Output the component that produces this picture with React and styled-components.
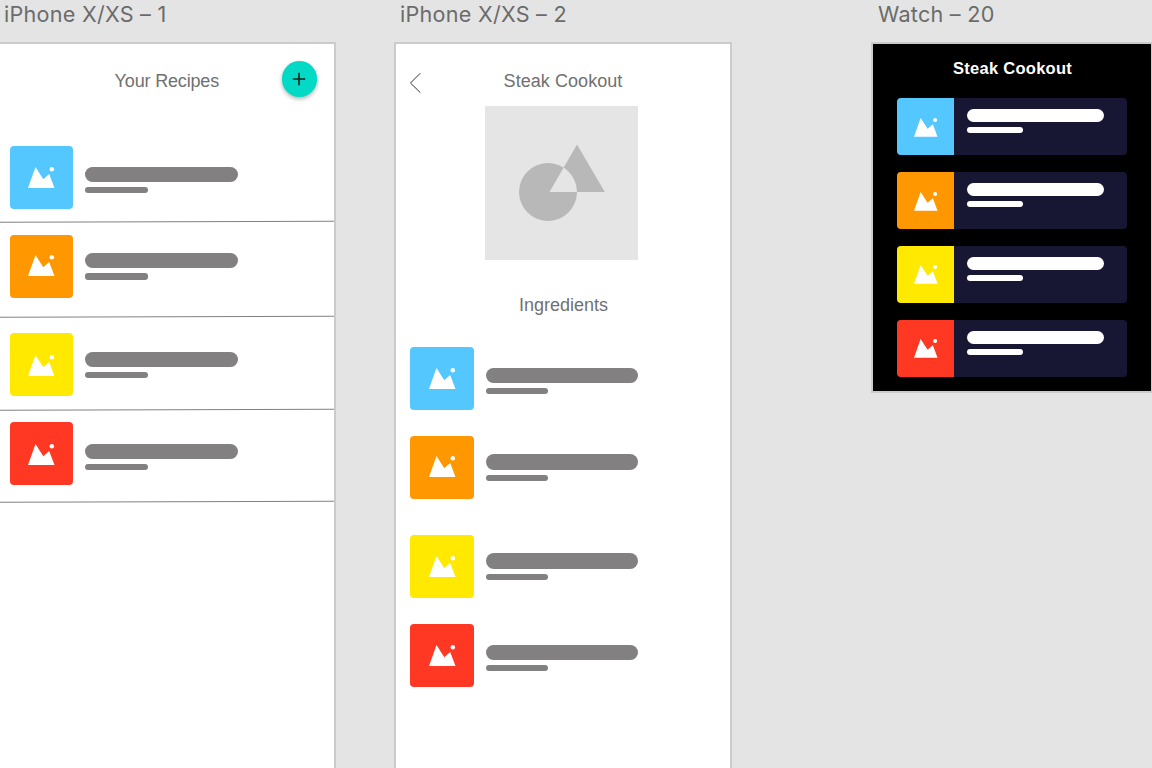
import React from "react";
import styled, { createGlobalStyle } from "styled-components";

const GlobalStyle = createGlobalStyle`
  * { box-sizing: border-box; }
  body { margin: 0; background: #e4e4e4; overflow: hidden; }
`;

const Canvas = styled.main`
  display: flex;
  align-items: flex-start;
  width: 1152px;
  height: 768px;
  overflow: hidden;
  background: #e4e4e4;
  font-family: "Liberation Sans", Arial, sans-serif;
`;

const Column = styled.section`
  flex: none;
  width: ${(p) => p.$width}px;
  margin-left: ${(p) => p.$gap || 0}px;
`;

const BoardLabel = styled.div`
  height: 42px;
  padding-left: ${(p) => p.$indent}px;
  font-family: Inter, sans-serif;
  font-size: 21.6px;
  line-height: 29px;
  letter-spacing: 0.25px;
  color: #6b6b6b;
  white-space: nowrap;
`;

const Phone = styled.div`
  height: 740px;
  background: #fff;
  border: 2px solid #cbcbcb;
  border-left-width: ${(p) => (p.$clipped ? 0 : 2)}px;
`;

const PhoneHeader = styled.header`
  display: grid;
  grid-template-columns: ${(p) => p.$columns};
  height: ${(p) => p.$height}px;
`;

const Title = styled.h1`
  margin: 0;
  padding: ${(p) => p.$top || 0}px 0 0 ${(p) => p.$left || 0}px;
  font-size: 18px;
  font-weight: 400;
  line-height: 20px;
  letter-spacing: ${(p) => p.$spacing || 0}px;
  text-align: center;
  white-space: nowrap;
  color: #707070;
`;

const SectionTitle = styled(Title)`
  height: 87px;
`;

const AddButton = styled.button`
  display: flex;
  align-items: center;
  justify-content: center;
  width: 35.6px;
  height: 35.8px;
  margin: 17.2px 0 0;
  padding: 0;
  border: 0;
  border-radius: 50%;
  background: #03dac5;
  box-shadow: 0 2px 4px rgba(0, 0, 0, 0.3);
`;

const BackButton = styled.button`
  display: block;
  width: 12px;
  height: 22px;
  margin: 28px 0 0 13px;
  padding: 0;
  border: 0;
  background: none;
  svg { display: block; }
`;

const Hero = styled.div`
  width: 153px;
  height: 154px;
  margin-left: 89px;
  background: #e5e5e5;
  svg { display: block; }
`;

const Row = styled.div`
  display: flex;
  align-items: flex-start;
  height: ${(p) => p.$height}px;
  padding: ${(p) => p.$top || 0}px 0 0 ${(p) => p.$left}px;
`;

const Divider = styled.div`
  height: 1px;
  margin-bottom: -1px;
  background: #808080;
  transform: translateY(-0.8px) rotate(-0.17deg);
`;

const Tile = styled.div`
  flex: none;
  width: ${(p) => p.$size}px;
  height: ${(p) => p.$size}px;
  padding: ${(p) => p.$iconTop}px 0 0 ${(p) => p.$iconLeft}px;
  border-radius: ${(p) => (p.$flush ? "4px 0 0 4px" : "4px")};
  background: ${(p) => p.$color};
  svg { display: block; }
`;

const Lines = styled.div`
  display: flex;
  flex-direction: column;
  gap: 5px;
  padding: ${(p) => p.$top}px 0 0 ${(p) => p.$left || 12.3}px;
`;

const Bar = styled.div`
  width: ${(p) => p.$width}px;
  height: ${(p) => p.$height}px;
  border-radius: ${(p) => (p.$height > 10 ? 8 : 3)}px;
  background: ${(p) => (p.$light ? "#fff" : "#828080")};
`;

const Watch = styled.div`
  height: 351px;
  border: 2px solid #cbcbcb;
  border-right-width: 1px;
  background: #000;
`;

const WatchTitle = styled.h2`
  height: 54px;
  margin: 0;
  padding: 15px 0 0 1px;
  font-size: 16.5px;
  font-weight: 700;
  line-height: 19px;
  letter-spacing: 0.28px;
  text-align: center;
  color: #fff;
`;

const WatchList = styled.div`
  display: flex;
  flex-direction: column;
  gap: 17px;
  padding-left: 24px;
`;

const WatchCard = styled.div`
  display: flex;
  width: 230px;
  height: 57px;
  border-radius: 4px;
  background: #181733;
`;

const COLORS = { blue: "#54c7ff", orange: "#ff9700", yellow: "#ffe900", red: "#ff3824" };

const RECIPES = [
  { color: "blue", height: 77, top: 0.6, icon: 21.4, lines: 21.2 },
  { color: "orange", height: 95, top: 12.6, icon: 20.4, lines: 18.6 },
  { color: "yellow", height: 93, top: 16, icon: 21.6, lines: 19 },
  { color: "red", height: 92, top: 12, icon: 21.8, lines: 21.6 },
];

const INGREDIENTS = [
  { color: "blue", height: 89, icon: 21.1, lines: 21 },
  { color: "orange", height: 98.6, icon: 20.4, lines: 18.4 },
  { color: "yellow", height: 89.2, icon: 21.6, lines: 18.7 },
  { color: "red", height: 64, icon: 21.2, lines: 21.2 },
];

const WATCH_ITEMS = [
  { color: "blue", icon: 20 },
  { color: "orange", icon: 20 },
  { color: "yellow", icon: 19.3 },
  { color: "red", icon: 19.2 },
];

function Mountains({ width = 27, height = 21.2 }) {
  return (
    <svg width={width} height={height} viewBox="0 0 27 21.2" fill="#fff">
      <path d="M7.5 0 15.3 12.2 21.2 7.1 26.5 21H0Z" />
      <circle cx="23.8" cy="2.3" r="2.25" />
    </svg>
  );
}

function PhoneRow({ item, left }) {
  return (
    <Row $height={item.height} $top={item.top} $left={left}>
      <Tile $size={63.4} $color={COLORS[item.color]} $iconTop={item.icon} $iconLeft={18.8}>
        <Mountains />
      </Tile>
      <Lines $top={item.lines}>
        <Bar $width={152.4} $height={15.3} />
        <Bar $width={62.4} $height={6.2} />
      </Lines>
    </Row>
  );
}

export default function App() {
  return (
    <Canvas>
      <GlobalStyle />
      <Column $width={336}>
        <BoardLabel $indent={4}>iPhone X/XS – 1</BoardLabel>
        <Phone $clipped>
          <PhoneHeader $columns="281.6px 36px" $height={101}>
            <Title $top={27} $left={52} $spacing={-0.17}>Your Recipes</Title>
            <AddButton aria-label="Add recipe">
              <svg width="14" height="14" viewBox="0 0 14 14" stroke="#06261f" strokeWidth="1.7">
                <path d="M7 .8v12.4M.8 7h12.4" />
              </svg>
            </AddButton>
          </PhoneHeader>
          {RECIPES.map((item) => (
            <React.Fragment key={item.color}>
              <PhoneRow item={item} left={9.7} />
              <Divider />
            </React.Fragment>
          ))}
        </Phone>
      </Column>

      <Column $width={338} $gap={58}>
        <BoardLabel $indent={6}>iPhone X/XS – 2</BoardLabel>
        <Phone>
          <PhoneHeader $columns="40px 254px" $height={62}>
            <BackButton aria-label="Back">
              <svg width="12" height="22" viewBox="0 0 12 22" fill="none" stroke="#333" strokeWidth="1">
                <path d="M11.3 1.2 1.5 11 11.3 20.6" />
              </svg>
            </BackButton>
            <Title $top={27} $spacing={0.06}>Steak Cookout</Title>
          </PhoneHeader>
          <Hero>
            <svg width="153" height="154" viewBox="0 0 153 154">
              <path
                fill="#b8b8b8"
                fillRule="evenodd"
                d="M34 86a29 29 0 1 0 58 0a29 29 0 1 0-58 0ZM92 38.5 119.8 86H64.5Z"
              />
            </svg>
          </Hero>
          <SectionTitle as="h2" $top={35} $left={1}>Ingredients</SectionTitle>
          {INGREDIENTS.map((item) => (
            <PhoneRow key={item.color} item={item} left={14.4} />
          ))}
        </Phone>
      </Column>

      <Column $width={281} $gap={139}>
        <BoardLabel $indent={7}>Watch – 20</BoardLabel>
        <Watch>
          <WatchTitle>Steak Cookout</WatchTitle>
          <WatchList>
            {WATCH_ITEMS.map((item) => (
              <WatchCard key={item.color}>
                <Tile $size={57.4} $flush $color={COLORS[item.color]} $iconTop={item.icon} $iconLeft={17.4}>
                  <Mountains width={24} height={18.85} />
                </Tile>
                <Lines $top={10.7} $left={12.6}>
                  <Bar $light $width={137} $height={13.6} />
                  <Bar $light $width={56} $height={5.7} />
                </Lines>
              </WatchCard>
            ))}
          </WatchList>
        </Watch>
      </Column>
    </Canvas>
  );
}
